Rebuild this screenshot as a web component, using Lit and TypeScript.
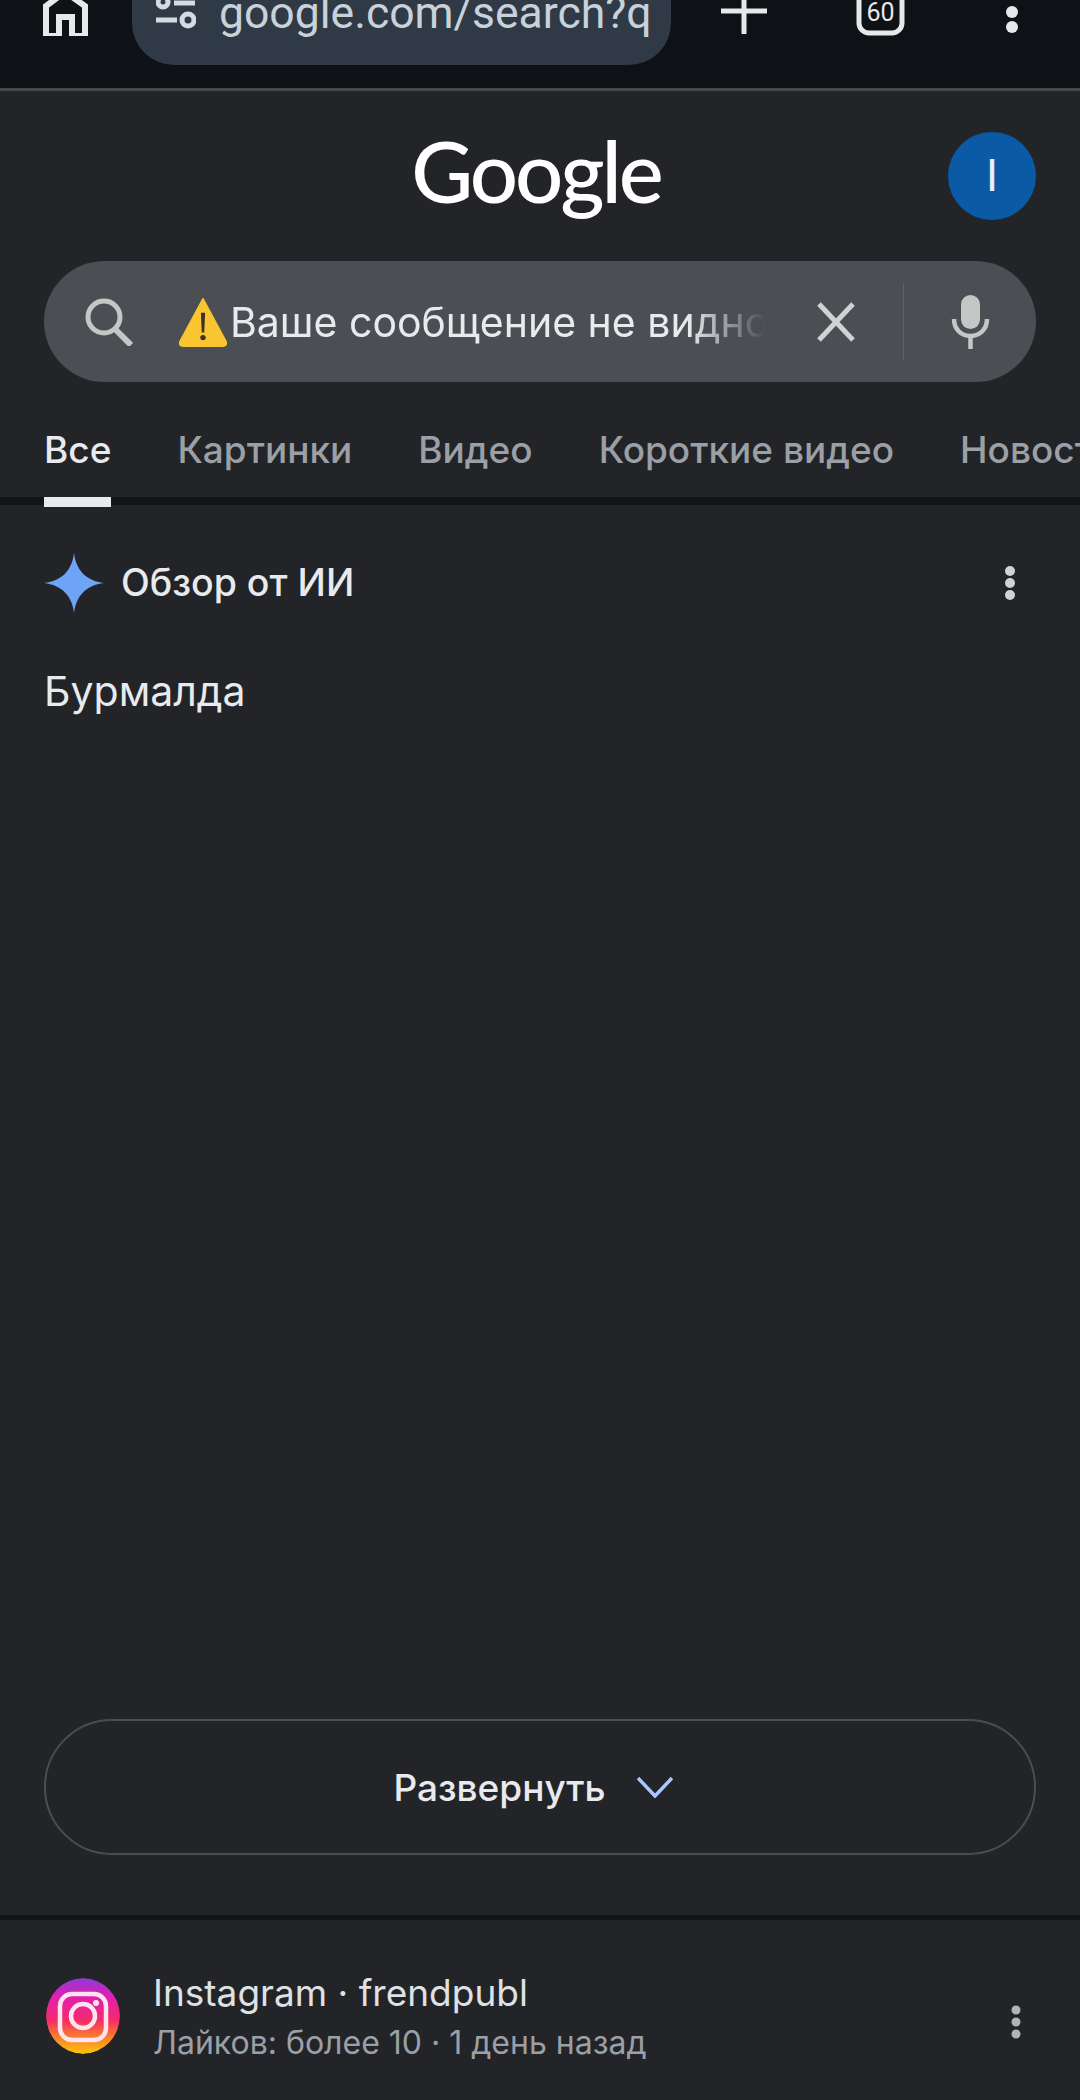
import { LitElement, css, html } from "lit";
import { customElement } from "lit/decorators.js";

const tabs = ["Все", "Картинки", "Видео", "Короткие видео", "Новости"];

@customElement("app-root")
export class AppRoot extends LitElement {
  static styles = css`
    :host {
      display: block;
      width: 1080px;
      height: 2100px;
      overflow: hidden;
      background: #232428;
      font-family: Inter, "Noto Sans", sans-serif;
      color: #e8eaed;
    }
    svg {
      display: block;
      flex: none;
    }

    .topbar {
      height: 88px;
      box-sizing: border-box;
      background: #0e1116;
      display: flex;
      align-items: flex-start;
      overflow: hidden;
      padding-left: 43px;
    }
    .url {
      width: 539px;
      height: 65px;
      margin-left: 44px;
      background: #2f3a46;
      border-radius: 0 0 42px 42px;
      display: flex;
      align-items: flex-start;
      gap: 23px;
      padding-left: 24px;
      box-sizing: border-box;
      flex: none;
    }
    .url span {
      font-family: Roboto, sans-serif;
      font-size: 44.500px;
      line-height: 44px;
      margin-top: -9px;
      color: #c9d1d9;
      white-space: nowrap;
    }
    .rule {
      height: 3px;
      background: #46484c;
    }

    .header {
      height: 170px;
      box-sizing: border-box;
      padding: 41px 44px 0;
      display: grid;
      grid-template-columns: 1fr auto 1fr;
      align-items: start;
    }
    .logo {
      font-family: Lato, sans-serif;
      font-size: 85px;
      font-weight: 500;
      line-height: 88px;
      color: #fff;
      letter-spacing: -3px;
      grid-column: 2;
      margin: -6px 8px 0 0;
    }
    .avatar {
      grid-column: 3;
      justify-self: end;
      width: 88px;
      height: 88px;
      border-radius: 50%;
      background: #0b5aa5;
      color: #e8f0fe;
      font-family: Roboto, sans-serif;
      font-size: 44px;
      display: flex;
      align-items: center;
      justify-content: center;
    }

    .search {
      margin: 0 44px;
      height: 121px;
      border-radius: 61px;
      background: #4b4e53;
      display: flex;
      align-items: center;
      padding-left: 41px;
    }
    .query {
      display: flex;
      align-items: center;
      width: 588px;
      margin-left: 44px;
      gap: 1px;
      overflow: hidden;
      white-space: nowrap;
      font-size: 41px;
      color: #e8eaed;
      -webkit-mask-image: linear-gradient(to right, #000 87%, transparent 100%);
      mask-image: linear-gradient(to right, #000 87%, transparent 100%);
    }
    .clear {
      margin-left: 52px;
    }
    .vline {
      width: 1px;
      height: 78px;
      background: #5f6267;
      margin-left: 48px;
    }
    .mic {
      margin-left: 47px;
    }

    .tabs {
      height: 125px;
      box-sizing: border-box;
      display: flex;
      gap: 66px;
      padding-left: 44px;
      overflow: hidden;
      background: linear-gradient(#131417, #131417) left bottom 2px / 100% 8px no-repeat;
      white-space: nowrap;
      font-size: 37px;
      font-weight: 500;
      color: #9aa0a6;
    }
    .tab {
      height: 125px;
      box-sizing: border-box;
      padding-top: 45px;
      line-height: 46px;
    }
    .tab.active {
      color: #e8eaed;
      border-bottom: 10px solid #e8eaed;
    }

    .overview {
      height: 1212px;
      box-sizing: border-box;
      padding: 46px 44px 0;
    }
    .ai-head {
      display: flex;
      align-items: center;
      height: 60px;
    }
    .ai-title {
      margin: -2px 0 0 17px;
      font-size: 37.500px;
      font-weight: 500;
      color: #e8eaed;
    }
    .ai-dots {
      margin-left: auto;
      margin-right: 20px;
    }
    .answer {
      margin-top: 51px;
      font-size: 41px;
      line-height: 54px;
      color: #e8eaed;
    }

    .more {
      margin: 0 44px;
      height: 136px;
      box-sizing: border-box;
      border: 2px solid #4b4d52;
      border-radius: 68px;
      padding-right: 14px;
      display: flex;
      align-items: center;
      justify-content: center;
      gap: 31px;
      font-size: 37px;
      font-weight: 500;
      color: #e8eaed;
    }

    .divider {
      margin-top: 60px;
      height: 5px;
      background: #131417;
    }

    .result {
      display: flex;
      align-items: flex-start;
      padding: 58px 0 0 46px;
    }
    .ig {
      width: 74px;
      height: 76px;
      border-radius: 50%;
    }
    .source {
      margin-left: 33px;
      margin-top: -7px;
    }
    .source .name {
      font-size: 37px;
      line-height: 44px;
      color: #dfe1e5;
    }
    .source .meta {
      font-size: 32px;
      line-height: 40px;
      margin-top: 8px;
      color: #9aa0a6;
    }
    .result-dots {
      margin-left: auto;
      margin-right: 58px;
      margin-top: 27px;
    }
  `;

  render() {
    return html`
      <div class="topbar">
        <svg width="45" height="36" viewBox="0 0 45 36" fill="none" stroke="#e6e8ea" stroke-width="6">
          <path d="M3 36V6L22 -8 42 6V36H29V17H16V36Z" />
        </svg>
        <div class="url">
          <svg width="40" height="30" viewBox="0 0 40 30" fill="none" stroke="#d5dbe1" stroke-width="5">
            <path d="M18 3H39M0 20H21" />
            <circle cx="7" cy="2" r="5" />
            <circle cx="32" cy="20" r="6" />
          </svg>
          <span>google.com/search?q</span>
        </div>
        <svg style="margin-left:50px" width="46" height="34" viewBox="0 0 46 34" fill="none" stroke="#e6e8ea" stroke-width="5">
          <path d="M0 11H46M23 -12V34" />
        </svg>
        <svg style="margin-left:89px" width="49" height="36" viewBox="0 0 49 36" fill="none">
          <rect x="3" y="-20" width="43" height="53" rx="10" stroke="#e6e8ea" stroke-width="5" />
          <text x="24.500" y="21" text-anchor="middle" font-family="Roboto, sans-serif" font-size="25" fill="#e6e8ea">60</text>
        </svg>
        <svg style="margin-left:101px" width="12" height="34" viewBox="0 0 12 34" fill="#e6e8ea">
          <circle cx="6" cy="12" r="6" />
          <circle cx="6" cy="27" r="6" />
        </svg>
      </div>
      <div class="rule"></div>

      <div class="header">
        <div class="logo">Google</div>
        <div class="avatar">I</div>
      </div>

      <div class="search">
        <svg width="48" height="48" viewBox="0 0 48 48" fill="none" stroke="#c4c7c5" stroke-width="5">
          <circle cx="19" cy="19" r="16" />
          <path d="M30 31L46 47" stroke-width="6" />
        </svg>
        <div class="query">
          <svg width="52" height="52" viewBox="0 0 50 50">
            <path d="M25 3L47 44Q48 48 44 48H6Q2 48 3 44Z" fill="#fbc531" stroke="#fbc531" stroke-width="2" stroke-linejoin="round" />
            <path d="M23 16H27L26.200 35H23.800Z" fill="#3a3326" />
            <circle cx="25" cy="40" r="2.600" fill="#3a3326" />
          </svg>
          <span>Ваше сообщение не видно</span>
        </div>
        <svg class="clear" width="38" height="40" viewBox="0 0 38 40" fill="none" stroke="#d0d2d4" stroke-width="5">
          <path d="M2 2L36 38M36 2L2 38" />
        </svg>
        <div class="vline"></div>
        <svg class="mic" width="39" height="54" viewBox="0 0 39 54" fill="none">
          <rect x="10" y="0" width="19" height="34" rx="9.500" fill="#c4c7c5" />
          <path d="M3 24C3 34 10 41 19.500 41S36 34 36 24M19.500 41V54" stroke="#c4c7c5" stroke-width="4.500" />
        </svg>
      </div>

      <div class="tabs">
        ${tabs.map((t, i) => html`<div class="tab ${i === 0 ? "active" : ""}">${t}</div>`)}
      </div>

      <div class="overview">
        <div class="ai-head">
          <svg width="60" height="60" viewBox="0 0 60 60">
            <path d="M30 0C32 17 42 28 60 30C42 32 32 43 30 60C28 43 18 32 0 30C18 28 28 17 30 0Z" fill="#6ea4f6" />
          </svg>
          <div class="ai-title">Обзор от ИИ</div>
          <svg class="ai-dots" width="12" height="36" viewBox="0 0 12 36" fill="#d0d2d4">
            <circle cx="6" cy="6" r="5" />
            <circle cx="6" cy="18" r="5" />
            <circle cx="6" cy="30" r="5" />
          </svg>
        </div>
        <div class="answer">Бурмалда</div>
      </div>

      <div class="more">
        <span>Развернуть</span>
        <svg width="36" height="22" viewBox="0 0 36 22" fill="none" stroke="#a8c7fa" stroke-width="3.500">
          <path d="M1 2L18 20L35 2" />
        </svg>
      </div>

      <div class="divider"></div>

      <div class="result">
        <svg class="ig" viewBox="0 0 74 76">
          <defs>
            <linearGradient id="ig-grad" x1="0" y1="0" x2="0" y2="1">
              <stop offset="0" stop-color="#8b3bd6" />
              <stop offset="0.25" stop-color="#e21fb0" />
              <stop offset="0.55" stop-color="#f52a6a" />
              <stop offset="0.78" stop-color="#fa7f2a" />
              <stop offset="1" stop-color="#fcc60f" />
            </linearGradient>
          </defs>
          <ellipse cx="37" cy="38" rx="37" ry="38" fill="url(#ig-grad)" />
          <rect x="14" y="16" width="46" height="46" rx="12" fill="none" stroke="#fde4ee" stroke-width="4.500" />
          <circle cx="37" cy="38" r="12" fill="none" stroke="#fde4ee" stroke-width="4.500" />
          <circle cx="50" cy="25" r="3" fill="#fde4ee" />
        </svg>
        <div class="source">
          <div class="name">Instagram · frendpubl</div>
          <div class="meta">Лайков: более 10 · 1 день назад</div>
        </div>
        <svg class="result-dots" width="12" height="34" viewBox="0 0 12 34" fill="#b0b3b8">
          <circle cx="6" cy="5" r="4.500" />
          <circle cx="6" cy="17" r="4.500" />
          <circle cx="6" cy="29" r="4.500" />
        </svg>
      </div>
    `;
  }
}
